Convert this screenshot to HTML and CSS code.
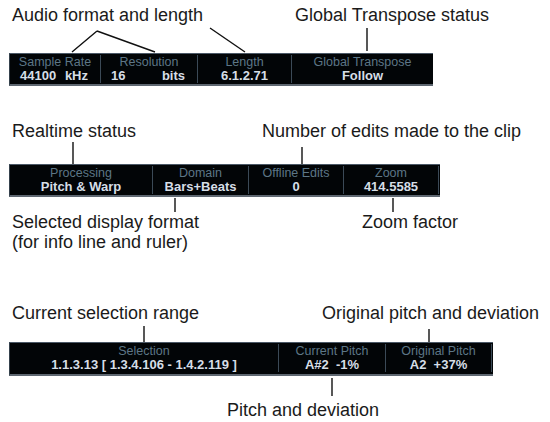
FILE: index.html
```html
<!DOCTYPE html>
<html>
<head>
<meta charset="utf-8">
<link rel="stylesheet" href="styles.css">
</head>
<body>
<div class="page">
  <div class="labels row-a">
    <span>Audio format and length</span>
    <span>Global Transpose status</span>
  </div>
  <div class="bar bar-1">
    <div class="cell">
      <div class="head">Sample Rate</div>
      <div class="val split"><span>44100</span><span>kHz</span></div>
    </div>
    <div class="cell">
      <div class="head">Resolution</div>
      <div class="val split"><span>16</span><span>bits</span></div>
    </div>
    <div class="cell">
      <div class="head">Length</div>
      <div class="val">6.1.2.71</div>
    </div>
    <div class="cell">
      <div class="head">Global Transpose</div>
      <div class="val">Follow</div>
    </div>
  </div>

  <div class="labels row-b">
    <span>Realtime status</span>
    <span>Number of edits made to the clip</span>
  </div>
  <div class="bar bar-2">
    <div class="cell">
      <div class="head">Processing</div>
      <div class="val">Pitch &amp; Warp</div>
    </div>
    <div class="cell">
      <div class="head">Domain</div>
      <div class="val">Bars+Beats</div>
    </div>
    <div class="cell">
      <div class="head">Offline Edits</div>
      <div class="val">0</div>
    </div>
    <div class="cell">
      <div class="head">Zoom</div>
      <div class="val">414.5585</div>
    </div>
    <div class="cell end"></div>
  </div>
  <div class="labels row-c">
    <span>Selected display format<br>(for info line and ruler)</span>
    <span>Zoom factor</span>
  </div>

  <div class="labels row-d">
    <span>Current selection range</span>
    <span>Original pitch and deviation</span>
  </div>
  <div class="bar bar-3">
    <div class="cell">
      <div class="head">Selection</div>
      <div class="val">1.1.3.13 [ 1.3.4.106 - 1.4.2.119 ]</div>
    </div>
    <div class="cell">
      <div class="head">Current Pitch</div>
      <div class="val pre">A#2  -1%</div>
    </div>
    <div class="cell">
      <div class="head">Original Pitch</div>
      <div class="val pre">A2  +37%</div>
    </div>
    <div class="cell end"></div>
  </div>
  <div class="labels row-e">
    <span>Pitch and deviation</span>
  </div>

  <svg class="leaders" width="550" height="422" viewBox="0 0 550 422">
    <g stroke="#111" stroke-width="1.4" fill="none">
      <path d="M97 31 L72 52 M97 31 L155 52"/>
      <path d="M210 28 L245 52"/>
      <path d="M367 28 L367 51"/>
      <path d="M73 142 L73 164"/>
      <path d="M302 147 L302 164"/>
      <path d="M175 198 L175 212"/>
      <path d="M393 198 L393 212"/>
      <path d="M144 326 L144 342"/>
      <path d="M429 329 L429 342"/>
      <path d="M332 378 L332 396"/>
    </g>
  </svg>
</div>
</body>
</html>
```

FILE: styles.css
```css
* { box-sizing: border-box; }
html, body { margin: 0; padding: 0; background: #fff; }
.page {
  position: relative;
  width: 550px;
  height: 422px;
  overflow: hidden;
  font-family: "Liberation Sans", Arial, sans-serif;
  background: #fff;
  padding-top: 5px;
}
.labels {
  display: grid;
  padding-left: 12px;
  font-size: 18px;
  line-height: 20px;
  color: #1a1a1a;
  white-space: nowrap;
}
.row-a { grid-template-columns: 283px auto; }
.row-b { grid-template-columns: 250px auto; margin-top: 35px; }
.row-c { grid-template-columns: 350px auto; margin-top: 15px; }
.row-d { grid-template-columns: 310px auto; margin-top: 51px; }
.row-e { padding-left: 227px; margin-top: 24px; }

.bar {
  display: grid;
  margin-left: 9px;
  background: #020507;
  border-top: 1px solid #4b5866;
  border-bottom: 2px solid #5e6771;
  border-left: 1px solid #35414c;
  padding: 1px 0 1px;
}
.bar-1 { width: 424px; margin-top: 28px; grid-template-columns: 90px 97px 94px 1fr; }
.bar-2 { width: 431px; margin-top: 23px; grid-template-columns: 142px 96px 95px 95px 1fr; }
.bar-3 { width: 484px; margin-top: 19px; padding-bottom: 2px; grid-template-columns: 268px 107px 106px 1fr; }

.cell {
  text-align: center;
  white-space: nowrap;
  overflow: hidden;
}
.cell + .cell { border-left: 1px solid #3b4a57; }
.head {
  font-size: 12.5px;
  line-height: 14px;
  color: #5d7686;
}
.val {
  font-size: 13px;
  line-height: 14px;
  font-weight: bold;
  color: #d6dee6;
}
.split {
  display: flex;
  justify-content: space-between;
  padding: 0 12px 0 10px;
}
.pre { white-space: pre; }

.leaders {
  position: absolute;
  left: 0;
  top: 0;
  pointer-events: none;
}
```
